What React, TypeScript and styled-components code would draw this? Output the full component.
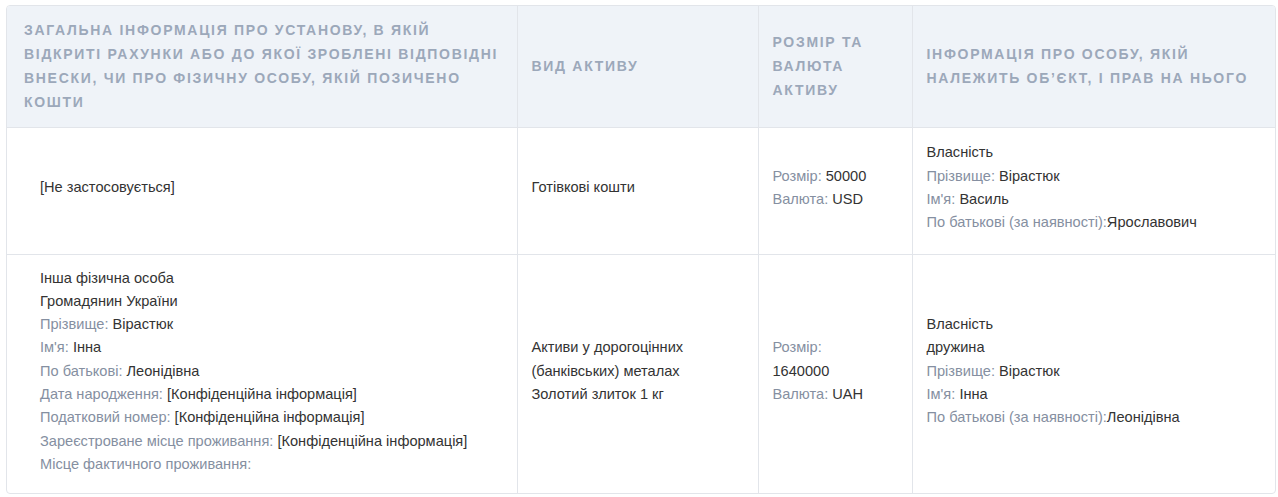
import React from 'react';
import styled, { createGlobalStyle } from 'styled-components';

const GlobalStyle = createGlobalStyle`
  html, body {
    margin: 0;
    padding: 0;
    background: #ffffff;
  }
  body {
    font-family: 'Liberation Sans', Arial, sans-serif;
  }
`;

const Page = styled.div`
  padding: 5px 2px 0 6px;
`;

const Frame = styled.div`
  border: 1px solid #e2e5ea;
  border-radius: 4px;
  overflow: hidden;
  width: 1268px;
`;

const Table = styled.table`
  width: 100%;
  border-collapse: collapse;
  table-layout: fixed;
`;

const Th = styled.th<{ $first?: boolean }>`
  background: #eff3f8;
  color: #9ca8ba;
  font-size: 14px;
  font-weight: bold;
  letter-spacing: 1.7px;
  text-transform: uppercase;
  text-align: left;
  vertical-align: middle;
  line-height: 24px;
  padding: 12px 12px 12px ${(p) => (p.$first ? '17px' : '14px')};
  border-left: 1px solid #e2e5ea;
  border-bottom: 1px solid #e2e5ea;
  &:first-child {
    border-left: none;
  }
`;

const Td = styled.td<{ $first?: boolean }>`
  color: #333;
  font-size: 14.6px;
  line-height: 23.3px;
  vertical-align: middle;
  padding: 12px 32px 12px ${(p) => (p.$first ? '33px' : '14px')};
  border-left: 1px solid #e2e5ea;
  border-bottom: 1px solid #e2e5ea;
  &:first-child {
    border-left: none;
  }
`;

const Row = styled.tr<{ $height: number }>`
  height: ${(p) => p.$height}px;
  &:last-child td {
    border-bottom: none;
  }
`;

const Content = styled.div`
  padding-bottom: 5px;
`;

const Line = styled.div``;

const Label = styled.span`
  color: #858fa1;
`;

type Item = { label?: string; value?: string };

const Lines = ({ items }: { items: Item[] }) => (
  <Content>
    {items.map((it, i) => (
      <Line key={i}>
        {it.label && <Label>{it.label}</Label>}
        {it.value}
      </Line>
    ))}
  </Content>
);

const headers = [
  'Загальна інформація про установу, в якій відкриті рахунки або до якої зроблені відповідні внески, чи про фізичну особу, якій позичено кошти',
  'Вид активу',
  'Розмір та валюта активу',
  'Інформація про особу, якій належить об’єкт, і прав на нього',
];

const rows: { height: number; cells: Item[][] }[] = [
  {
    height: 127,
    cells: [
      [{ value: '[Не застосовується]' }],
      [{ value: 'Готівкові кошти' }],
      [
        { label: 'Розмір: ', value: '50000' },
        { label: 'Валюта: ', value: 'USD' },
      ],
      [
        { value: 'Власність' },
        { label: 'Прізвище: ', value: 'Вірастюк' },
        { label: "Ім'я: ", value: 'Василь' },
        { label: 'По батькові (за наявності):', value: 'Ярославович' },
      ],
    ],
  },
  {
    height: 238,
    cells: [
      [
        { value: 'Інша фізична особа' },
        { value: 'Громадянин України' },
        { label: 'Прізвище: ', value: 'Вірастюк' },
        { label: "Ім'я: ", value: 'Інна' },
        { label: 'По батькові: ', value: 'Леонідівна' },
        { label: 'Дата народження: ', value: '[Конфіденційна інформація]' },
        { label: 'Податковий номер: ', value: '[Конфіденційна інформація]' },
        { label: 'Зареєстроване місце проживання: ', value: '[Конфіденційна інформація]' },
        { label: 'Місце фактичного проживання: ' },
      ],
      [
        { value: 'Активи у дорогоцінних (банківських) металах' },
        { value: 'Золотий злиток 1 кг' },
      ],
      [
        { label: 'Розмір: ', value: '1640000' },
        { label: 'Валюта: ', value: 'UAH' },
      ],
      [
        { value: 'Власність' },
        { value: 'дружина' },
        { label: 'Прізвище: ', value: 'Вірастюк' },
        { label: "Ім'я: ", value: 'Інна' },
        { label: 'По батькові (за наявності):', value: 'Леонідівна' },
      ],
    ],
  },
];

const widths = [510, 241, 154, 363];

export default function App() {
  return (
    <>
      <GlobalStyle />
      <Page>
        <Frame>
          <Table>
            <colgroup>
              {widths.map((w, i) => (
                <col key={i} style={{ width: w }} />
              ))}
            </colgroup>
            <thead>
              <tr style={{ height: 121 }}>
                {headers.map((h, i) => (
                  <Th key={i} $first={i === 0}>
                    {h}
                  </Th>
                ))}
              </tr>
            </thead>
            <tbody>
              {rows.map((r, ri) => (
                <Row key={ri} $height={r.height}>
                  {r.cells.map((c, ci) => (
                    <Td key={ci} $first={ci === 0}>
                      <Lines items={c} />
                    </Td>
                  ))}
                </Row>
              ))}
            </tbody>
          </Table>
        </Frame>
      </Page>
    </>
  );
}
